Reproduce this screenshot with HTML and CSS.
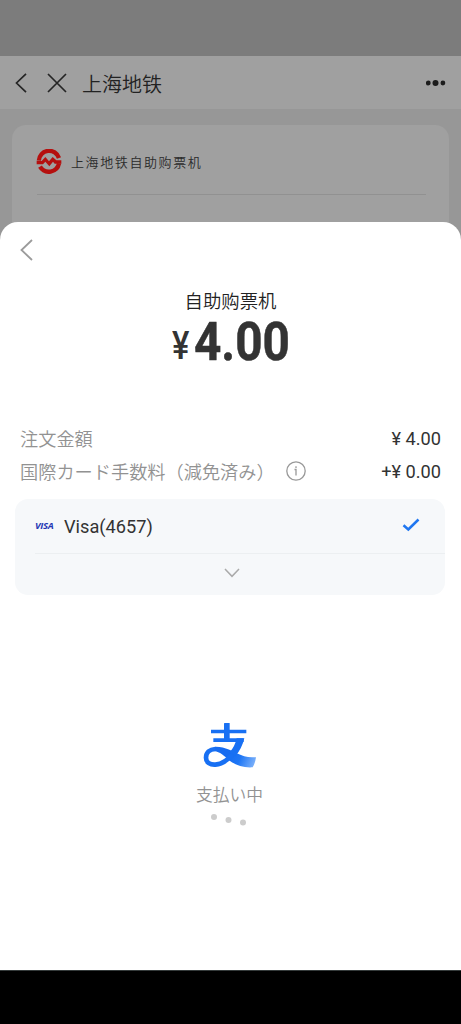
FILE: index.html
```html
<!DOCTYPE html>
<html lang="ja">
<head>
<meta charset="utf-8">
<meta name="viewport" content="width=device-width, initial-scale=1">
<title>自助购票机</title>
<link rel="stylesheet" href="styles.css">
</head>
<body>
<div class="screen">
  <div class="status"></div>
  <header class="nav">
    <svg class="nav-back" width="12" height="20" viewBox="0 0 12 20"><path d="M11 .8 1.500 10l9.500 9.200"/></svg>
    <svg class="nav-close" width="20" height="20" viewBox="0 0 20 20"><path d="M1 1l18 18M19 1 1 19"/></svg>
    <h1 class="nav-title" lang="zh-CN">上海地铁</h1>
    <svg class="nav-more" width="20" height="6" viewBox="0 0 20 6"><circle cx="2.300" cy="3" r="2.400"/><circle cx="9.500" cy="3" r="3"/><circle cx="16.900" cy="3" r="2.400"/></svg>
  </header>
  <main class="page">
    <section class="ticket">
      <div class="ticket-head" lang="zh-CN">
        <svg width="26" height="26" viewBox="0 0 78 78"><g fill="none" stroke="#b5100f" stroke-width="13"><path d="M8.500 35A31 31 0 0 1 69 27"/><path d="M69 43A31 31 0 0 1 12 53"/></g><path fill="#b5100f" d="M2 36h15L28 24l11 13 11-13 11 10h15v10H56l-5-6-11 14-12-14-7 8H2z"/></svg>
        <span>上海地铁自助购票机</span>
      </div>
    </section>
  </main>
  <section class="sheet">
    <svg class="sheet-back" width="13" height="22" viewBox="0 0 13 22"><path d="M12 1 1.500 11 12 21"/></svg>
    <div class="merchant" lang="zh-CN">自助购票机</div>
    <div class="total"><span class="yen">¥</span><span class="digits">4.00</span></div>
    <div class="fees">
      <div class="fee"><span class="label">注文金額</span><span class="value">¥ 4.00</span></div>
      <div class="fee"><span class="label">国際カード手数料（減免済み）</span>
        <svg class="info" width="20" height="20" viewBox="0 0 20 20"><circle cx="10" cy="10" r="9.200"/><path d="M8.500 8.500H10v6M10 5.300v1.600"/></svg>
        <span class="value">+¥ 0.00</span></div>
    </div>
    <div class="method">
      <div class="method-row">
        <span class="visa">VISA</span>
        <span class="method-name">Visa(4657)</span>
        <svg class="check" width="18" height="14" viewBox="0 0 18 14"><path d="M1.500 7.300 6.300 11.500 16.500 1.500"/></svg>
      </div>
      <div class="method-more"><svg width="16" height="10" viewBox="0 0 16 10"><path d="M1 1l7 7.300L15 1"/></svg></div>
    </div>
    <div class="paying">
      <svg class="pay-logo" width="54" height="46" viewBox="0 0 162 138">
        <defs><linearGradient id="tail" gradientUnits="userSpaceOnUse" x1="80" y1="90" x2="160" y2="125"><stop offset="0" stop-color="#176cf0"/><stop offset=".4" stop-color="#1e76f5"/><stop offset="1" stop-color="#86b8fb"/></linearGradient></defs>
        <path fill="#1870f3" d="M63 2q0-2 2-2h15v20h50v11H24V20h39zM31 46h91v11H31zM63 30h17v18H63z"/>
        <path fill="url(#tail)" d="M36 71c30-1 52 14 76 24 16 7 30 8 47 8q-2 16-10 30c-26 2-51-6-69-20C64 99 50 86 34 84z"/>
        <path fill="none" stroke="#1870f3" stroke-width="14" d="M37 78C20 79 9 89 9 104c0 15 13 22 28 21 21-2 38-14 53-32"/>
        <path fill="#1870f3" d="M101 46h23q-7 30-27 54L80 88q16-18 21-42z"/>
      </svg>
      <div class="pay-label">支払い中</div>
      <svg class="dots" width="38" height="13" viewBox="0 0 38 13"><circle cx="3" cy="4" r="3"/><circle cx="17.500" cy="7" r="3"/><circle cx="32" cy="9.500" r="3"/></svg>
    </div>
  </section>
  <div class="system-bar"></div>
</div>
</body>
</html>
```
FILE: styles.css
```css
* { box-sizing: border-box; }
body { margin: 0; background: #000; font-family: Roboto, "Noto Sans CJK JP", sans-serif; }
[lang="zh-CN"] { font-family: "Noto Sans CJK SC", sans-serif; }
svg { display: block; flex: none; }
.screen { width: 461px; height: 1024px; display: flex; flex-direction: column; background: #979797; overflow: hidden; }
.status { height: 56px; background: #7c7c7c; flex: none; }
.nav { height: 54px; flex: none; display: flex; align-items: center; padding: 0 15px; background: #a0a0a0; border-bottom: 1px solid #979797; }
.nav-back, .nav-close { fill: none; stroke: #252525; stroke-width: 1.7; }
.nav-close { margin-left: 20px; }
.nav-title { margin: 2px 0 0 15px; font-size: 20px; font-weight: 350; line-height: 30px; color: #222; }
.nav-more { margin-left: auto; fill: #1d1d1d; }
.page { height: 112px; flex: none; padding: 15px 12px 0; }
.ticket { height: 120px; border-radius: 14px; background: #a0a0a0; padding: 0 23px 0 25px; }
.ticket-head { height: 70px; padding-top: 4px; display: flex; align-items: center; gap: 9px; border-bottom: 1px solid #919191; font-size: 13px; font-weight: 350; letter-spacing: 1.6px; color: #2b2b2b; }
.ticket-head svg { margin-left: -1px; }
.sheet { position: relative; height: 748px; flex: none; background: #fff; border-radius: 18px 18px 0 0; padding: 17px 15px 0; }
.sheet-back { margin-left: 5px; fill: none; stroke: #9b9b9b; stroke-width: 1.8; }
.merchant { margin-top: 25px; text-align: center; font-size: 18.400px; font-weight: 350; line-height: 28px; color: #222; }
.total { height: 55px; padding-top: 3px; display: flex; justify-content: center; color: #333; font-weight: 700; }
.yen { width: 22px; font-size: 38px; line-height: 58px; font-weight: 500; transform: scaleX(.86); transform-origin: 0 0; }
.digits { width: 95px; font-size: 53px; line-height: 50px; transform: scaleX(.9); transform-origin: 0 0; white-space: nowrap; -webkit-text-stroke: .5px #333; }
.fees { margin-top: 52px; padding: 0 5px; }
.fee { height: 33px; display: flex; align-items: center; font-size: 18.200px; }
.label { color: #929292; font-family: "Noto Sans CJK JP", sans-serif; font-weight: 350; white-space: nowrap; }
.value { margin: 1px 0 0 auto; color: #333; }
.info { margin-left: 11px; fill: none; stroke: #999; stroke-width: 1.3; }
.method { margin: 12px 1px 0 0; height: 96px; border-radius: 13px; background: #f6f8fa; }
.method-row { height: 55px; margin-left: 20px; padding-right: 25px; display: flex; align-items: center; border-bottom: 1px solid #eceff1; }
.visa { width: 29px; font: italic 700 9.500px/12px "Open Sans", sans-serif; letter-spacing: -.3px; color: #2638b5; }
.method-name { font-size: 18.200px; color: #333; }
.check { margin: -3px 0 0 auto; fill: none; stroke: #1f76f0; stroke-width: 2.500; }
.method-more { padding: 14px 0 0 4px; display: flex; justify-content: center; }
.method-more path { fill: none; stroke: #aaa; stroke-width: 1.500; }
.paying { margin: 128px 2px 0 0; display: flex; flex-direction: column; align-items: center; }
.pay-label { margin-top: 12px; font: 350 16.800px/27px "Noto Sans CJK JP", sans-serif; color: #929292; }
.dots { margin-top: 5px; fill: #ccc; }
.system-bar { flex: 1; background: #000; border-top: 1px solid #353b3b; }
```
